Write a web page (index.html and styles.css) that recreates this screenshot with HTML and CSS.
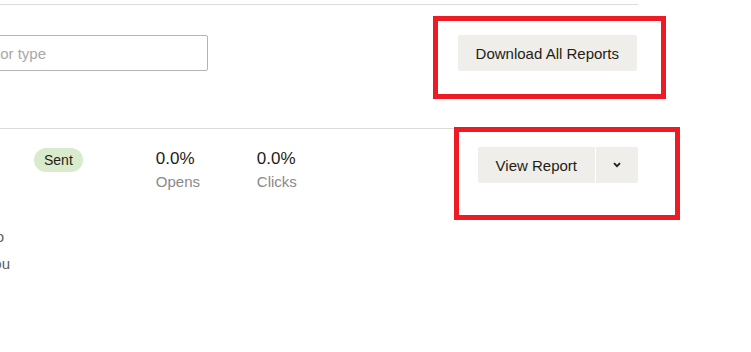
FILE: index.html
```html
<!DOCTYPE html>
<html lang="en">
<head>
<meta charset="utf-8">
<title>Reports</title>
<link rel="stylesheet" href="styles.css">
</head>
<body>
<div class="page">
  <div class="top-rule"></div>
  <div class="toolbar">
    <input class="filter" type="text" placeholder="Filter by name or type">
    <button class="btn">Download All Reports</button>
  </div>
  <div class="report-row">
    <div class="meta">
      <div class="meta-line first">Sent to</div>
      <div class="meta-line">Sent by you</div>
    </div>
    <span class="badge">Sent</span>
    <div class="stats">
      <div class="stat">
        <div class="stat-value">0.0%</div>
        <div class="stat-label">Opens</div>
      </div>
      <div class="stat">
        <div class="stat-value">0.0%</div>
        <div class="stat-label">Clicks</div>
      </div>
    </div>
    <div class="actions">
      <button class="btn btn-main">View Report</button>
      <button class="btn btn-caret" aria-label="More options">
        <svg width="8" height="6" viewBox="0 0 8 6"><path d="M1 1.2 L4 4.2 L7 1.2" fill="none" stroke="#241c15" stroke-width="1.8"/></svg>
      </button>
    </div>
  </div>
</div>
<div class="annot annot-download"></div>
<div class="annot annot-view"></div>
</body>
</html>
```
FILE: styles.css
```css
html, body {
  margin: 0;
  padding: 0;
  background: #ffffff;
  overflow: hidden;
}
body {
  font-family: "Liberation Sans", Arial, sans-serif;
  color: #241c15;
  width: 751px;
  height: 352px;
  position: relative;
}
.page {
  width: 638px;
}
.top-rule {
  height: 4px;
  border-bottom: 1px solid #dcdcdc;
}
.toolbar {
  display: flex;
  justify-content: space-between;
  align-items: flex-start;
  padding-top: 30px;
  height: 93px;
  border-bottom: 1px solid #dcdcdc;
}
.filter {
  box-sizing: border-box;
  width: 320px;
  height: 36px;
  margin: 0 0 0 -112px;
  padding: 0 12px;
  border: 1px solid #b4b4b4;
  border-radius: 2px;
  font-family: "Liberation Sans", Arial, sans-serif;
  font-size: 15px;
  color: #241c15;
  background: #fff;
}
.filter::placeholder {
  color: #a8a8a8;
}
.btn {
  box-sizing: border-box;
  height: 36px;
  padding: 0 18px;
  border: 0;
  border-radius: 2px;
  background: #efeeea;
  font-family: "Liberation Sans", Arial, sans-serif;
  font-size: 15px;
  color: #241c15;
  cursor: pointer;
}
.toolbar .btn {
  margin-right: 1px;
}
.report-row {
  display: flex;
  align-items: flex-start;
  padding-top: 19px;
}
.meta {
  width: 200px;
  margin-left: -190px;
  padding-top: 75px;
  text-align: right;
  font-size: 15px;
  line-height: 27px;
  color: #5e5e5e;
}
.meta-line.first {
  padding-right: 6px;
}
.badge {
  margin-left: 24px;
  height: 24px;
  line-height: 24px;
  padding: 0 10px;
  border-radius: 12px;
  background: #d9ebcd;
  font-size: 14px;
  color: #241c15;
}
.stats {
  display: flex;
  margin-left: 73px;
}
.stat {
  width: 101px;
}
.stat-value {
  font-size: 17px;
  line-height: 21px;
  color: #241c15;
}
.stat-label {
  margin-top: 2px;
  font-size: 15px;
  line-height: 22px;
  color: #8a8a8a;
}
.actions {
  display: flex;
  margin-left: auto;
  margin-top: -1px;
}
.btn-main {
  border-radius: 2px 0 0 2px;
}
.btn-caret {
  width: 42px;
  padding: 0;
  margin-left: 1px;
  border-radius: 0 2px 2px 0;
  display: flex;
  align-items: center;
  justify-content: center;
}
.annot {
  position: absolute;
  box-sizing: border-box;
  border: 5px solid #ed1c24;
}
.annot-download {
  left: 433px;
  top: 16px;
  width: 233px;
  height: 83px;
}
.annot-view {
  left: 454px;
  top: 127px;
  width: 226px;
  height: 93px;
}
```
